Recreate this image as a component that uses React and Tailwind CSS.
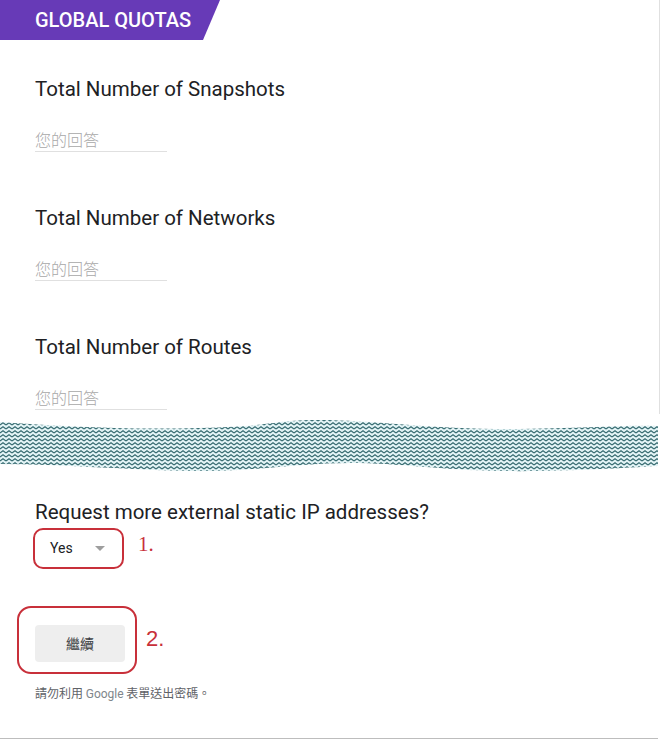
import React from 'react';

const questions = [
  'Total Number of Snapshots',
  'Total Number of Networks',
  'Total Number of Routes',
];

const WaveBreak = () => (
  <svg width="661" height="62" viewBox="0 0 661 62" className="block">
    <defs>
      <pattern id="zigzag" width="6" height="4" patternUnits="userSpaceOnUse">
        <rect width="6" height="4" fill="#e3f4f6" />
        <path d="M0 3 L3 0.8 L6 3" fill="none" stroke="#33686e" strokeWidth="1.1" />
      </pattern>
      <clipPath id="band">
        <path d="M0 8 C 60 12, 120 16, 200 14 S 270 6, 320 6 S 440 16, 520 15 S 620 11, 658 12 L658 52 C 620 54, 560 58, 500 57 S 400 49, 350 49 S 250 58, 190 57 S 60 50, 0 50 Z" />
      </clipPath>
    </defs>
    <rect width="661" height="62" fill="url(#zigzag)" clipPath="url(#band)" />
  </svg>
);

const Question = ({ title }) => (
  <div className="flex flex-col">
    <h2 className="text-[20.5px] leading-6 text-[#202124]">{title}</h2>
    <div className="mt-[26px] w-[132px] h-[25px] border-b border-[#e0e0e0] text-[16px] leading-6 text-[#a8a8a8] font-['Noto_Sans_CJK_TC',sans-serif] font-light">
      您的回答
    </div>
  </div>
);

const App = () => {
  return (
    <div className="w-[661px] h-[739px] bg-white font-['Roboto','Noto_Sans_CJK_TC',sans-serif]">
      {/* upper card */}
      <section className="w-[660px] h-[414px] border-r border-[#e0e0e0]">
        <div className="w-[220px] h-10 bg-[#673ab7] [clip-path:polygon(0_0,100%_0,calc(100%-17px)_100%,0_100%)] flex items-center pl-[35px]">
          <span className="text-white text-[20px] font-medium">GLOBAL QUOTAS</span>
        </div>
        <div className="pl-[35px] pt-[37px] flex flex-col gap-[54px]">
          {questions.map((q) => (
            <Question key={q} title={q} />
          ))}
        </div>
      </section>

      <WaveBreak />

      {/* lower card */}
      <section className="relative w-[658px] h-[263px] border-b border-[#bdbdbd] pl-[35px] pt-[24px]">
        <h2 className="text-[20.5px] leading-6 text-[#202124]">Request more external static IP addresses?</h2>

        <div className="mt-[6px] h-9 w-[80px] flex items-center pl-[15px] gap-[22px]">
          <span className="text-[14px] text-[#202124]">Yes</span>
          <span className="w-0 h-0 border-l-[5px] border-r-[5px] border-t-[5px] border-l-transparent border-r-transparent border-t-[#9e9e9e]" />
        </div>

        <button className="mt-[59px] w-[90px] h-[37px] rounded bg-[#eeeeee] text-[14px] text-[#3c4043] font-['Noto_Sans_CJK_TC',sans-serif]">
          繼續
        </button>

        <p className="mt-[23px] text-[12px] leading-4 text-[#5f6368] font-['Noto_Sans_CJK_TC',sans-serif]">
          請勿利用 <span className="font-['Roboto',sans-serif] text-[#80868b]">Google</span> 表單送出密碼。
        </p>

        {/* red annotations */}
        <div className="absolute left-[33px] top-[52px] w-[91px] h-[41px] rounded-[10px] border-2 border-[#c8303a]" />
        <span className="absolute left-[138px] top-[56px] text-[21px] leading-6 text-[#c8303a] font-['Liberation_Serif',serif]">1.</span>
        <div className="absolute left-[17px] top-[130px] w-[120px] h-[68px] rounded-[14px] border-2 border-[#c8303a]" />
        <span className="absolute left-[146px] top-[151px] text-[22px] leading-6 text-[#c8303a] font-['Liberation_Sans',sans-serif]">2.</span>
      </section>
    </div>
  );
};

export default App;
